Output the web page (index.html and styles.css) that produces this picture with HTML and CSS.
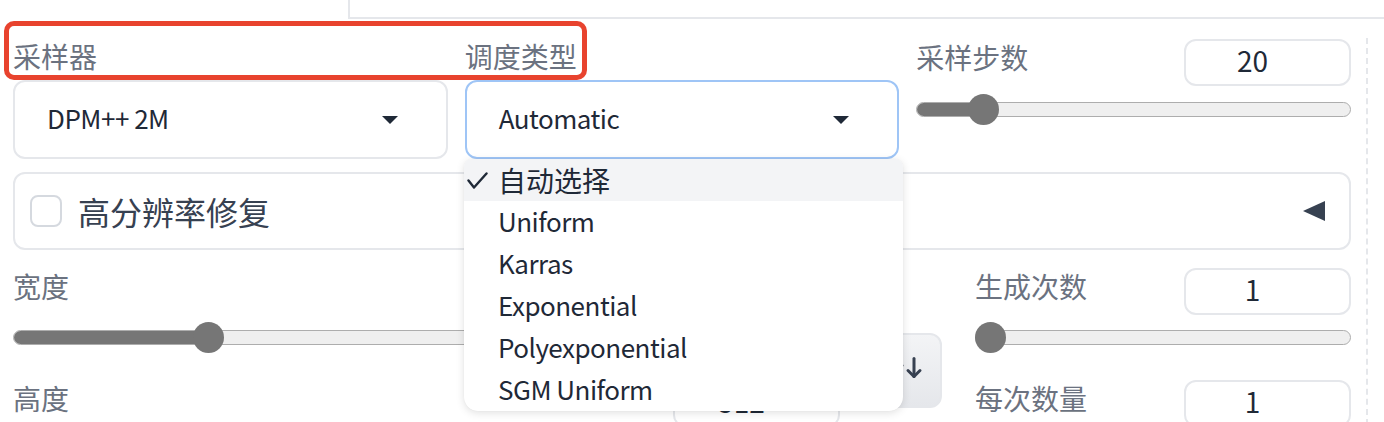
FILE: index.html
```html
<!DOCTYPE html>
<html lang="zh-CN">
<head>
<meta charset="utf-8">
<title>txt2img settings</title>
<link rel="stylesheet" href="styles.css">
</head>
<body>
<div class="page">
  <div class="topbar"><div class="top-panel"></div></div>
  <div class="main">
    <div class="content">
      <div class="row-top">
        <div class="field">
          <div class="label">采样器</div>
          <div class="select"><span class="value">DPM++ 2M</span><span class="caret"></span></div>
        </div>
        <div class="field">
          <div class="label">调度类型</div>
          <div class="select focused"><span class="value">Automatic</span><span class="caret"></span></div>
        </div>
        <div class="slider-block first">
          <div class="slider-head"><span class="label">采样步数</span><span class="num">20</span></div>
          <div class="slider" style="--p:0.1275"><div class="track"><div class="fill"></div></div><div class="thumb"></div></div>
        </div>
      </div>

      <div class="accordion">
        <span class="checkbox"></span>
        <span class="acc-label">高分辨率修复</span>
        <span class="acc-arrow"></span>
      </div>

      <div class="row-bottom">
        <div class="dims">
          <div class="dim-sliders">
            <div class="slider-block">
              <div class="slider-head"><span class="label">宽度</span><span class="num">512</span></div>
              <div class="slider" style="--p:0.2258"><div class="track"><div class="fill"></div></div><div class="thumb"></div></div>
            </div>
            <div class="slider-block">
              <div class="slider-head"><span class="label">高度</span><span class="num">512</span></div>
              <div class="slider" style="--p:0.2258"><div class="track"><div class="fill"></div></div><div class="thumb"></div></div>
            </div>
          </div>
          <button class="swap" type="button" aria-label="swap">
            <svg width="36" height="22" viewBox="0 0 36 22" fill="none" stroke="#374151" stroke-width="3" stroke-linecap="round" stroke-linejoin="round">
              <line x1="9" y1="2.5" x2="9" y2="20.5"/>
              <polyline points="3,8.5 9,2.5 15,8.5"/>
              <line x1="27" y1="1.5" x2="27" y2="19.5"/>
              <polyline points="21,13.5 27,19.5 33,13.5"/>
            </svg>
          </button>
        </div>
        <div class="batch">
          <div class="slider-block">
            <div class="slider-head"><span class="label">生成次数</span><span class="num">1</span></div>
            <div class="slider" style="--p:0"><div class="track"><div class="fill"></div></div><div class="thumb"></div></div>
          </div>
          <div class="slider-block">
            <div class="slider-head"><span class="label">每次数量</span><span class="num">1</span></div>
            <div class="slider" style="--p:0"><div class="track"><div class="fill"></div></div><div class="thumb"></div></div>
          </div>
        </div>
      </div>
    </div>
    <div class="divider"></div>
  </div>

  <ul class="menu">
    <li class="item selected">
      <svg class="check" width="21" height="17" viewBox="0 0 21 17" fill="none" stroke="#1f2937" stroke-width="2.4" stroke-linecap="round" stroke-linejoin="round"><polyline points="1.5,8.5 7,15.5 19.5,1.5"/></svg>
      <span class="cjk">自动选择</span>
    </li>
    <li class="item">Uniform</li>
    <li class="item">Karras</li>
    <li class="item">Exponential</li>
    <li class="item">Polyexponential</li>
    <li class="item">SGM Uniform</li>
  </ul>

  <div class="annotation"></div>
</div>
</body>
</html>
```

FILE: styles.css
```css
html, body {
  margin: 0;
  padding: 0;
  overflow: hidden;
  background: #ffffff;
}

* { box-sizing: border-box; }

.page {
  position: relative;
  width: 1384px;
  height: 422px;
  overflow: hidden;
  font-family: "Noto Sans CJK SC", "Noto Sans", sans-serif;
  color: #1f2937;
}

/* top strip */
.topbar {
  height: 19px;
}
.top-panel {
  margin-left: 348px;
  height: 19px;
  border-left: 2px solid #e5e7eb;
  border-bottom: 2px solid #e5e7eb;
}

.main {
  display: flex;
  padding-left: 13px;
}
.content {
  width: 1338px;
  flex: none;
  padding-top: 19px;
}
.divider {
  margin-left: 15px;
  margin-top: 19px;
  border-left: 2px dashed #e5e7eb;
  width: 2px;
  min-height: 420px;
}

.label {
  display: block;
  font-size: 28px;
  line-height: 36px;
  height: 36px;
  color: #6b7280;
  white-space: nowrap;
}

/* row 1 */
.row-top {
  display: grid;
  grid-template-columns: 1fr 1fr 1fr;
  column-gap: 17px;
}
.select {
  margin-top: 6px;
  height: 79px;
  border: 2px solid #e5e7eb;
  border-radius: 12px;
  background: #fff;
  display: flex;
  align-items: center;
  justify-content: space-between;
  padding: 0 48px 4px 32px;
}
.select.focused {
  border-color: #9fc5f6;
}
.value {
  font-size: 26px;
  letter-spacing: -0.5px;
  line-height: 36px;
  color: #1f2937;
}
.caret {
  width: 0;
  height: 0;
  margin-top: 4px;
  border-left: 8px solid transparent;
  border-right: 8px solid transparent;
  border-top: 8px solid #1f2937;
}

/* slider blocks */
.slider-head {
  display: flex;
  justify-content: space-between;
  align-items: flex-start;
  height: 46px;
}
.num {
  width: 167px;
  height: 47px;
  border: 2px solid #e5e7eb;
  border-radius: 12px;
  font-size: 28px;
  line-height: 38px;
  text-align: center;
  padding-right: 30px;
  color: #1f2937;
}
.slider-block.first .slider-head { margin-top: 1px; }
.slider-block.first .slider { margin-top: 9px; }

.slider {
  position: relative;
  margin-top: 8px;
  height: 31px;
  display: flex;
  align-items: center;
}
.track {
  width: 100%;
  height: 15px;
  border-radius: 8px;
  background: #efefef;
  border: 1.5px solid #adadad;
  overflow: hidden;
}
.fill {
  height: 100%;
  width: calc(var(--p) * (100% - 31px) + 15.5px);
  background: #767676;
}
.thumb {
  position: absolute;
  top: 0;
  left: calc(var(--p) * (100% - 31px));
  width: 31px;
  height: 31px;
  border-radius: 50%;
  background: #767676;
}

/* accordion */
.accordion {
  margin-top: 13px;
  height: 78px;
  border: 2px solid #e5e7eb;
  border-radius: 12px;
  display: flex;
  align-items: center;
  padding: 0 24px 0 15px;
}
.checkbox {
  width: 32px;
  height: 32px;
  border: 2px solid #d5d9df;
  border-radius: 8px;
  background: #fff;
  flex: none;
}
.acc-label {
  margin-left: 16px;
  font-size: 32px;
  line-height: 40px;
  color: #374151;
  flex: 1;
}
.acc-arrow {
  width: 0;
  height: 0;
  border-top: 10.5px solid transparent;
  border-bottom: 10.5px solid transparent;
  border-right: 22px solid #374151;
}

/* bottom rows */
.row-bottom {
  margin-top: 18px;
  display: flex;
}
.dims {
  width: 929px;
  display: flex;
  align-items: flex-start;
}
.dim-sliders {
  width: 827px;
  display: flex;
  flex-direction: column;
  gap: 27px;
}
.swap {
  margin-left: 28px;
  margin-top: 65px;
  width: 74px;
  height: 75px;
  border: 2px solid #e5e7eb;
  border-radius: 12px;
  background: linear-gradient(to bottom, #f3f4f6, #e5e7eb);
  display: flex;
  align-items: center;
  justify-content: center;
  padding: 0 0 6px 0;
}
.batch {
  margin-left: 33px;
  width: 376px;
  display: flex;
  flex-direction: column;
  gap: 27px;
}

/* open dropdown menu */
.menu {
  position: absolute;
  left: 464px;
  top: 159px;
  width: 439px;
  margin: 0;
  padding: 0;
  list-style: none;
  background: #fff;
  border-radius: 8px 8px 14px 14px;
  box-shadow: 0 2px 8px rgba(0, 0, 0, 0.12), 0 0 1px rgba(0, 0, 0, 0.08);
}
.item {
  height: 42px;
  line-height: 40px;
  padding-left: 34px;
  font-size: 26px;
  letter-spacing: -0.5px;
  color: #1f2937;
  white-space: nowrap;
}
.item.selected {
  background: #f3f4f6;
  border-radius: 8px 8px 0 0;
  padding-left: 3px;
  display: flex;
  align-items: center;
  line-height: 42px;
}
.check {
  flex: none;
}
.cjk {
  margin-left: 10px;
  font-size: 28px;
  letter-spacing: 0;
}

/* red annotation */
.annotation {
  position: absolute;
  left: 4px;
  top: 21px;
  width: 583px;
  height: 59px;
  border: 5px solid #e8432e;
  border-radius: 10px;
}
```
